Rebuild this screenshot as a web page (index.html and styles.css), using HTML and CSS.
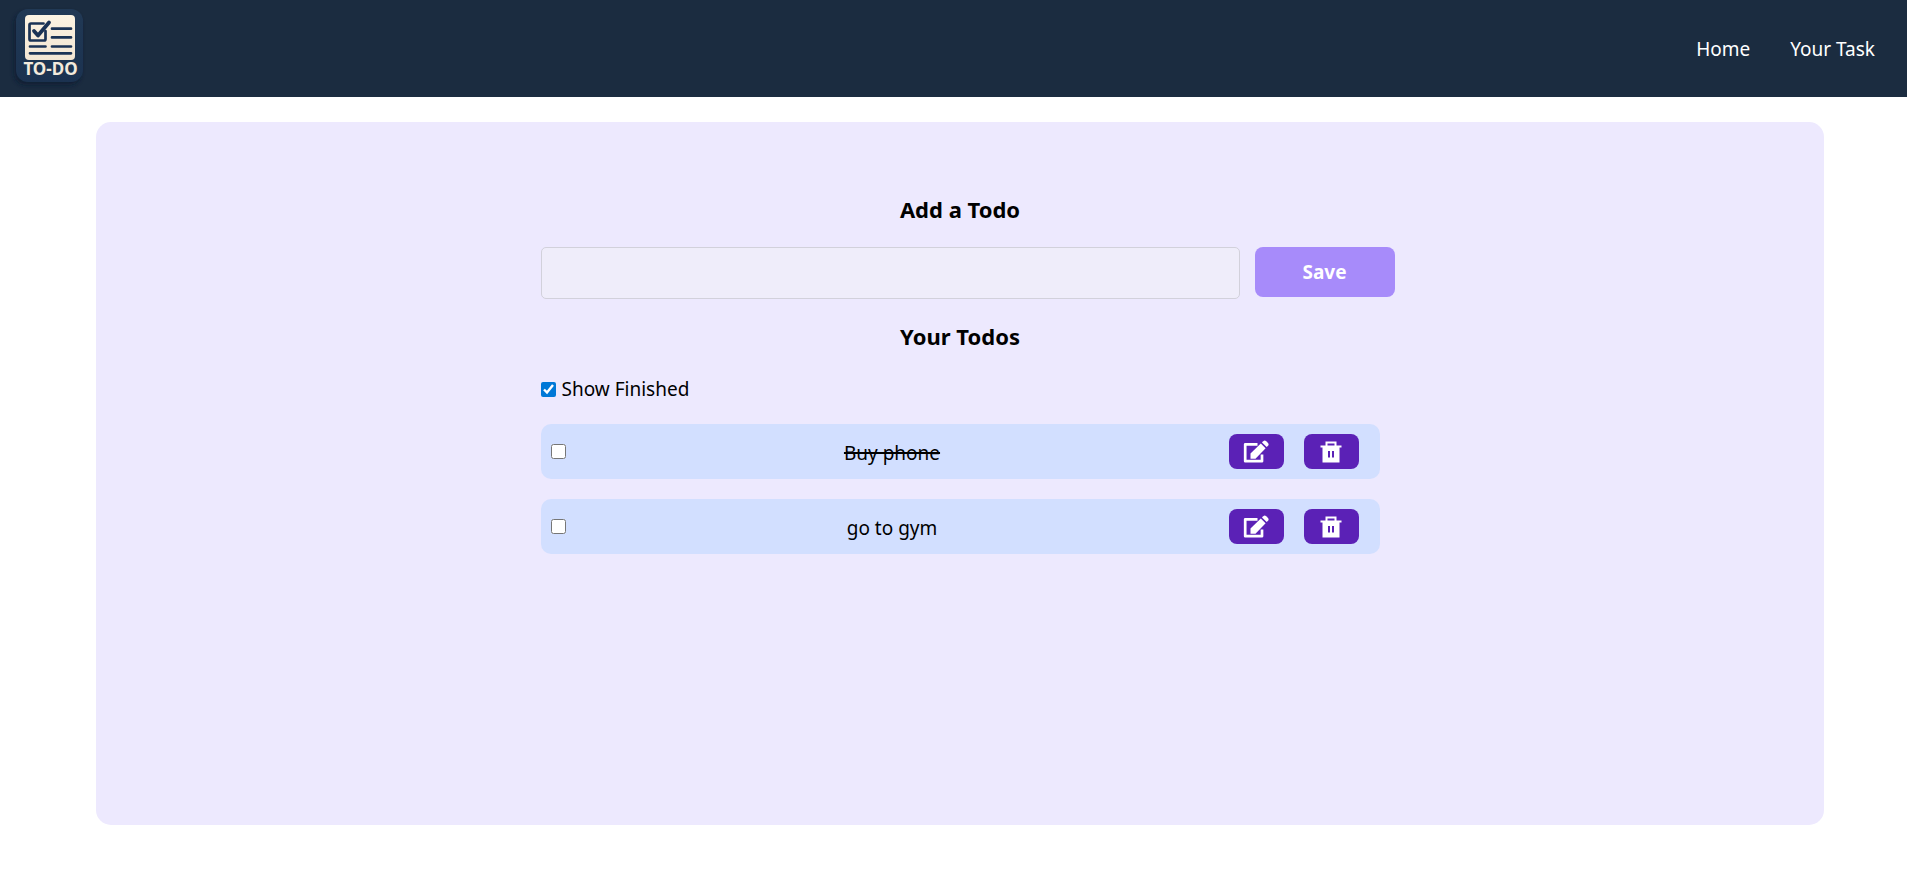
FILE: index.html
```html
<!DOCTYPE html>
<html lang="en">
<head>
<meta charset="utf-8">
<meta name="viewport" content="width=device-width, initial-scale=1">
<title>Todo List</title>
<link rel="stylesheet" href="styles.css">
</head>
<body>
<svg class="sprite" aria-hidden="true">
  <symbol id="icon-edit" viewBox="0 0 26 24">
    <path d="M14.500 4.300H2.200V21.200H19V14.500" fill="none" stroke="currentColor" stroke-width="2.700" stroke-linejoin="round"/>
    <path d="M7.500 18.800V13.500L17.800 3.600L22.600 8.300L12.500 18.800Z" fill="currentColor"/>
    <path d="M19 2.500L20.300 1.200Q21.700 0 23.200 1.200L25 3Q26.200 4.400 25 5.800L23.700 7.100Z" fill="currentColor"/>
  </symbol>
  <symbol id="icon-trash" viewBox="0 0 22 22">
    <path fill="currentColor" fill-rule="evenodd" d="M5.500 4.500V0.500H16.500V4.500H21.500V6.500H19.500V21.500H2.500V6.500H0.500V4.500ZM7.500 4.500H14.500V2.500H7.500ZM8 10V16.500H10V10ZM12 10V16.500H14V10Z"/>
  </symbol>
</svg>

<header class="navbar">
  <a class="logo" href="#" aria-label="To-do home">
    <svg class="logo-art" viewBox="0 0 97 97">
      <defs>
        <linearGradient id="tile" x1="0" y1="0" x2="0" y2="1"><stop offset="0" stop-color="#213955"/><stop offset="1" stop-color="#1b3250"/></linearGradient>
        <linearGradient id="paper" x1="0" y1="0" x2="0" y2="1"><stop offset="0" stop-color="#fcf3e2"/><stop offset="1" stop-color="#f3e6d3"/></linearGradient>
        <filter id="soft" x="-20%" y="-20%" width="140%" height="140%"><feGaussianBlur stdDeviation="2"/></filter>
      </defs>
      <rect x="14" y="12" width="67" height="73" rx="12" fill="#0b1b31" opacity=".8" filter="url(#soft)"/>
      <rect x="16" y="9" width="67" height="73" rx="12" fill="url(#tile)"/>
      <rect x="25" y="15" width="50" height="45" rx="4" fill="url(#paper)"/>
      <g fill="none" stroke="#1b3355" stroke-width="2.700" stroke-linecap="round" stroke-linejoin="round">
        <path d="M43.500 23.500H31Q29.500 23.500 29.500 25V39Q29.500 40.500 31 40.500H44Q45.500 40.500 45.500 39V31"/>
        <path d="M34 31L38 35.500L49 22.500" stroke-width="3.800"/>
        <path d="M52 28.700H71M52 37.400H71M30 46.500H45.500M52 46.500H71M30 53.300H71"/>
      </g>
      <text class="logo-text" x="50.500" y="75" text-anchor="middle">TO-DO</text>
    </svg>
  </a>
  <nav class="links">
    <a href="#">Home</a>
    <a href="#">Your Task</a>
  </nav>
</header>

<main class="panel">
  <div class="content">
    <h2 class="title">Add a Todo</h2>
    <form class="add-form">
      <input class="todo-input" type="text" aria-label="New todo">
      <button class="save" type="button">Save</button>
    </form>
    <h2 class="title">Your Todos</h2>
    <label class="show"><input class="check" type="checkbox" checked>Show Finished</label>
    <ul class="todos">
      <li class="todo">
        <input class="check" type="checkbox" id="todo-1">
        <label class="name done" for="todo-1">Buy phone</label>
        <button class="action" type="button" aria-label="Edit"><svg class="edit"><use href="#icon-edit"/></svg></button>
        <button class="action" type="button" aria-label="Delete"><svg class="trash"><use href="#icon-trash"/></svg></button>
      </li>
      <li class="todo">
        <input class="check" type="checkbox" id="todo-2">
        <label class="name" for="todo-2">go to gym</label>
        <button class="action" type="button" aria-label="Edit"><svg class="edit"><use href="#icon-edit"/></svg></button>
        <button class="action" type="button" aria-label="Delete"><svg class="trash"><use href="#icon-trash"/></svg></button>
      </li>
    </ul>
  </div>
</main>
</body>
</html>
```
FILE: styles.css
```css
* { box-sizing: border-box; margin: 0; padding: 0; }
body {
  display: flex;
  flex-direction: column;
  min-height: 100vh;
  background: #fff;
  color: #000;
  font: 19px/28px "Segoe UI", "Noto Sans", "Open Sans", sans-serif;
}
button, input { font: inherit; }
.sprite { display: none; }
.navbar {
  display: flex;
  align-items: center;
  justify-content: space-between;
  padding-right: 32px;
  background: #1b2c40;
}
.logo, .logo-art { display: block; }
.logo-art { width: 97px; height: 97px; }
.logo-text { font: bold 17px "Noto Sans", sans-serif; fill: #f3eadc; }
.links { display: flex; gap: 40px; }
.links a { color: #fff; text-decoration: none; }
.panel {
  flex: 1;
  margin: 25px 83px 48px 96px;
  padding: 71px 16px;
  border-radius: 15px;
  background: #ede9fe;
}
.content { max-width: 839px; margin: 0 auto; }
.title {
  font-size: 22px;
  line-height: 33px;
  text-align: center;
}
.add-form {
  display: flex;
  align-items: flex-start;
  gap: 15px;
  margin: 21px -15px 21px 0;
}
.todo-input {
  flex: 1;
  min-width: 0;
  height: 52px;
  padding: 0 12px;
  border: 1px solid #d2d1db;
  border-radius: 5px;
  background: #efedfa;
}
.save {
  width: 140px;
  height: 50px;
  border: 0;
  border-radius: 8px;
  background: #a78bfa;
  color: #fff;
  font-weight: 700;
}
.check {
  flex: none;
  width: 15px;
  height: 15px;
  accent-color: #0078d7;
}
.show {
  display: flex;
  align-items: center;
  gap: 6px;
  width: fit-content;
  margin: 22px 0 21px;
}
.todos { display: grid; gap: 20px; list-style: none; }
.todo {
  display: flex;
  align-items: center;
  padding: 10px 11px 10px 10px;
  border-radius: 10px;
  background: #d2dfff;
}
.name { flex: 1; padding-top: 2px; text-align: center; }
.done { text-decoration: line-through 2px; }
.action {
  display: grid;
  place-items: center;
  width: 55px;
  height: 35px;
  margin: 0 10px;
  border: 0;
  border-radius: 8px;
  background: #5b21b6;
  color: #fff;
}
.edit { width: 26px; height: 24px; }
.trash { width: 22px; height: 22px; }
```
